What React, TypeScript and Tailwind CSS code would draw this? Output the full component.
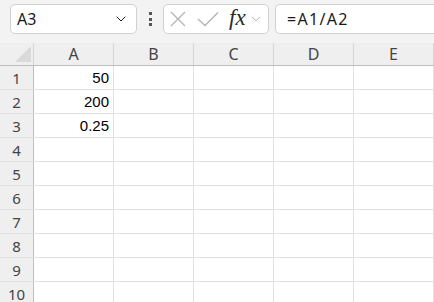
import { ChevronDown } from "lucide-react";

const cols = ["A", "B", "C", "D", "E"];
const rows = [1, 2, 3, 4, 5, 6, 7, 8, 9, 10];
const data: Record<string, string> = { A1: "50", A2: "200", A3: "0.25" };

const uiFont = { fontFamily: '"Noto Sans", "Open Sans", sans-serif' };

const Toolbar = () => (
  <div className="flex items-start h-[43px] pt-[4px]">
    <div className="ml-[10px] w-[127px] h-[30px] flex items-center justify-between bg-white border border-[#d1d1d1] rounded-[5px] pl-[6px] pr-[7px]">
      <span className="text-[16px] text-[#1a1a1a]" style={uiFont}>A3</span>
      <ChevronDown className="w-[16px] h-[16px] text-[#222]" strokeWidth={1.5} />
    </div>
    <div className="ml-[11px] w-[4px] h-[30px] flex flex-col items-center justify-center gap-[2.5px]">
      <span className="w-[3px] h-[3px] bg-[#555]" />
      <span className="w-[3px] h-[3px] bg-[#555]" />
      <span className="w-[3px] h-[3px] bg-[#555]" />
    </div>
    <div className="ml-[11px] w-[106px] h-[30px] flex items-center bg-white border border-[#d1d1d1] rounded-[5px]">
      <svg className="ml-[6px]" width="16" height="16" viewBox="0 0 16 16">
        <path d="M1 1 L15 15 M15 1 L1 15" stroke="#b3b3b3" strokeWidth="1.3" fill="none" />
      </svg>
      <svg className="ml-[11px]" width="22" height="16" viewBox="0 0 22 16">
        <path d="M1 8 L8 14.5 L21 1.5" stroke="#b3b3b3" strokeWidth="1.3" fill="none" />
      </svg>
      <span
        className="ml-[10px] text-[23px] italic text-[#2a2a2a] leading-none -mt-[3px]"
        style={{ fontFamily: '"Liberation Serif", serif' }}
      >
        fx
      </span>
      <ChevronDown className="ml-[3px] w-[14px] h-[14px] text-[#999]" strokeWidth={1.4} />
    </div>
    <div className="ml-[6px] flex-1 h-[30px] flex items-center bg-white border border-[#d1d1d1] border-r-0 rounded-l-[5px] pl-[11px]">
      <span className="text-[16px] tracking-[1.3px] text-[#1a1a1a]" style={uiFont}>=A1/A2</span>
    </div>
  </div>
);

const Grid = () => (
  <div className="bg-white">
    <div className="flex h-[23px] bg-[#efefef] border-b border-[#bdbdbd]">
      <div className="w-[34px] shrink-0 border-r border-[#d6d6d6] relative">
        <svg className="absolute left-[15px] top-[3px]" width="16" height="16" viewBox="0 0 16 16">
          <path d="M16 0 L16 16 L0 16 Z" fill="#dadada" />
        </svg>
      </div>
      {cols.map((c) => (
        <div
          key={c}
          className="w-[80px] shrink-0 border-r border-[#d6d6d6] flex items-center justify-center text-[16px] text-[#444]"
          style={uiFont}
        >
          {c}
        </div>
      ))}
    </div>
    {rows.map((r) => (
      <div key={r} className="flex h-[24px] border-b border-[#e1e1e1]">
        <div
          className="w-[34px] shrink-0 bg-[#efefef] border-r border-[#bdbdbd] flex items-end justify-center pb-[2px] text-[15px] text-[#444] leading-none"
          style={uiFont}
        >
          <span className="mb-[1px]">{r}</span>
        </div>
        {cols.map((c) => (
          <div
            key={c}
            className="w-[80px] shrink-0 border-r border-[#e1e1e1] flex items-end justify-end pr-[4px] pb-[4px] text-[15px] text-black leading-none"
            style={{ fontFamily: '"Liberation Sans", Arial, sans-serif' }}
          >
            {data[`${c}${r}`] ?? ""}
          </div>
        ))}
      </div>
    ))}
  </div>
);

export default function App() {
  return (
    <div className="w-[434px] h-[302px] overflow-hidden bg-[#f3f3f3]">
      <Toolbar />
      <Grid />
    </div>
  );
}
